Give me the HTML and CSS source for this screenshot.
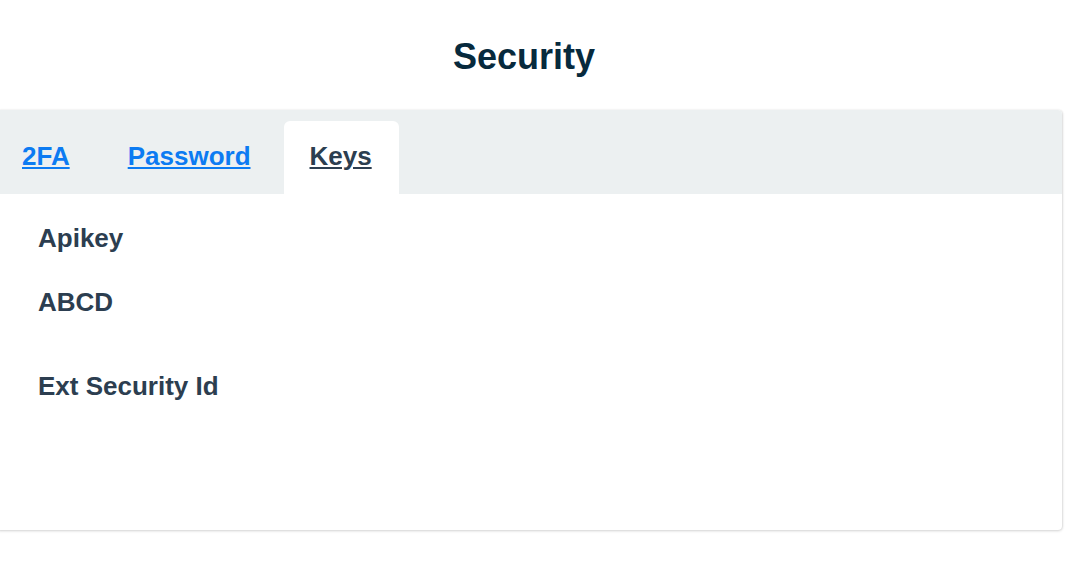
FILE: index.html
```html
<!DOCTYPE html>
<html lang="en">
<head>
<meta charset="utf-8">
<title>Security</title>
<link rel="stylesheet" href="styles.css">
</head>
<body>
  <h1 class="page-title">Security</h1>
  <div class="card">
    <nav class="tabs">
      <a class="tab" href="#">2FA</a>
      <a class="tab" href="#">Password</a>
      <a class="tab active" href="#">Keys</a>
    </nav>
    <div class="panel">
      <div class="label label-first">Apikey</div>
      <div class="label value">ABCD</div>
      <div class="label label-ext">Ext Security Id</div>
    </div>
  </div>
</body>
</html>
```

FILE: styles.css
```css
html, body {
  margin: 0;
  padding: 0;
  background: #ffffff;
}

body {
  font-family: "Liberation Sans", Arial, Helvetica, sans-serif;
  color: #2c3e50;
  padding-bottom: 4px;
}

.page-title {
  margin: 0;
  padding-top: 36px;
  font-size: 36px;
  font-weight: 700;
  line-height: 41px;
  text-align: center;
  color: #072a3d;
  padding-right: 24px;
}

.card {
  margin: 33px 10px 0 -4px;
  background: #ffffff;
  border-radius: 4px;
  box-shadow: 0 1px 3px rgba(0, 0, 0, 0.16), 1px 0 2px rgba(0, 0, 0, 0.08);
  overflow: hidden;
}

.tabs {
  display: flex;
  gap: 6px;
  padding-top: 11px;
  background: #ecf0f1;
  border-radius: 4px 4px 0 0;
}

.tab {
  display: block;
  padding: 20px 26px 23px;
  font-size: 26px;
  font-weight: 700;
  line-height: 30px;
  color: #0c7bf2;
  text-decoration: underline;
  text-decoration-thickness: 2px;
  text-underline-offset: 2px;
  border-radius: 6px 6px 0 0;
}

.tab.active {
  background: #ffffff;
  color: #2c3e50;
  margin-left: 1px;
  padding-right: 27px;
}

.panel {
  padding: 29px 0 129px 42px;
}

.label {
  font-size: 26px;
  font-weight: 700;
  line-height: 30px;
  color: #2c3e50;
}

.value {
  margin-top: 34px;
}

.label-ext {
  margin-top: 54px;
}
```
